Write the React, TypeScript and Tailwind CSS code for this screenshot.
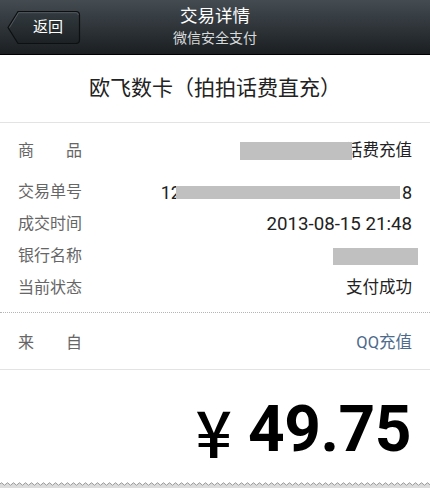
import React from "react";

const font = { fontFamily: "Roboto, 'Noto Sans CJK SC', sans-serif" };

function Row({ label, children, spread }: { label: string; children: React.ReactNode; spread?: boolean }) {
  return (
    <div className="flex h-[32px] items-center justify-between pl-[18px] pr-[18px]">
      {spread ? (
        <div className="flex w-[64px] justify-between text-[16px] text-[#666]">
          <span>{label[0]}</span>
          <span>{label[1]}</span>
        </div>
      ) : (
        <div className="text-[16px] text-[#666]">{label}</div>
      )}
      <div className="flex items-center text-[16.5px] text-[#222]">{children}</div>
    </div>
  );
}

export default function App() {
  return (
    <div className="relative flex h-[488px] w-[430px] flex-col overflow-hidden bg-white" style={font}>
      {/* Header */}
      <div className="relative flex h-[55px] shrink-0 flex-col items-center border-b border-black bg-gradient-to-b from-[#444c52] to-[#1b1f22]">
        <div className="absolute left-[7px] top-[10px] h-[35px] w-[74px]">
          <svg width="74" height="35" viewBox="0 0 74 35" className="absolute inset-0">
            <defs>
              <linearGradient id="bb" x1="0" y1="0" x2="0" y2="1">
                <stop offset="0" stopColor="#333b40" />
                <stop offset="1" stopColor="#1c2124" />
              </linearGradient>
            </defs>
            <path d="M1 17.5 L11 1.5 H69 Q72.5 1.5 72.5 5 V30 Q72.5 33.5 69 33.5 H11 Z" fill="url(#bb)" stroke="#0d0f10" strokeWidth="1.2" />
            <path d="M2.5 17.5 L11.6 2.7 H69 Q71.3 2.7 71.3 5" fill="none" stroke="#5a6166" strokeWidth="0.8" />
          </svg>
          <span className="absolute left-[26px] top-[7px] text-[15px] leading-[20px] text-white">返回</span>
        </div>
        <div className="mt-[4px] text-[17.5px] leading-[24px] text-white">交易详情</div>
        <div className="text-[14px] leading-[20px] text-[#d7dadc]">微信安全支付</div>
      </div>

      {/* Title */}
      <div className="flex h-[68px] shrink-0 items-center justify-center border-b border-[#e3e3e3] pt-[1px] text-[21px] text-[#222]">
        欧飞数卡（拍拍话费直充）
      </div>

      {/* Detail rows */}
      <div className="flex shrink-0 flex-col pt-[12px]">
        <Row label="商品" spread>
          <span className="relative z-10 -mr-[6px] h-[18px] w-[112px] bg-[#c0c0c0]" />
          <span>话费充值</span>
        </Row>
        <div className="h-[9px]" />
        <Row label="交易单号">
          <span className="text-[18px]">12</span>
          <span className="-ml-[5px] h-[13px] w-[224px] bg-[#c0c0c0]" />
          <span className="ml-[2px] text-[18px]">8</span>
        </Row>
        <Row label="成交时间">
          <span className="text-[18.7px]">2013-08-15 21:48</span>
        </Row>
        <Row label="银行名称">
          <span className="mr-[-6px] h-[17px] w-[85px] bg-[#c0c0c0]" />
        </Row>
        <Row label="当前状态">
          <span>支付成功</span>
        </Row>
      </div>
      <div className="mt-[8px] shrink-0 border-b border-dotted border-[#b5b5b5]" />

      <div className="shrink-0 pt-[14px] pb-[10px]">
        <Row label="来自" spread>
          <span className="text-[#4d6b8c]">QQ充值</span>
        </Row>
      </div>
      <div className="shrink-0 border-b border-[#e3e3e3]" />

      {/* Amount */}
      <div className="flex flex-1 items-center justify-end pr-[19px] pt-[8px]">
        <span className="mr-[16px] text-[64px] font-medium leading-none text-black" style={{ fontFamily: "'Noto Sans CJK SC', sans-serif" }}>
          ¥
        </span>
        <span className="text-[64px] font-bold leading-none tracking-[-0.5px] text-black" style={{ fontFamily: "Roboto, sans-serif" }}>
          49.75
        </span>
      </div>

      {/* Wavy bottom */}
      <div className="h-[6px] shrink-0">
        <svg width="430" height="6" viewBox="0 0 430 6">
          <defs>
            <pattern id="wv" width="6" height="6" patternUnits="userSpaceOnUse">
              <rect width="6" height="6" fill="#dcdcdc" />
              <path d="M0 2 Q1.5 -0.5 3 2 T6 2 V0 H0 Z" fill="#ffffff" />
              <path d="M0 2 Q1.5 -0.5 3 2 T6 2" fill="none" stroke="#9a9a9a" strokeWidth="1" />
            </pattern>
          </defs>
          <rect width="430" height="6" fill="url(#wv)" />
        </svg>
      </div>
    </div>
  );
}
